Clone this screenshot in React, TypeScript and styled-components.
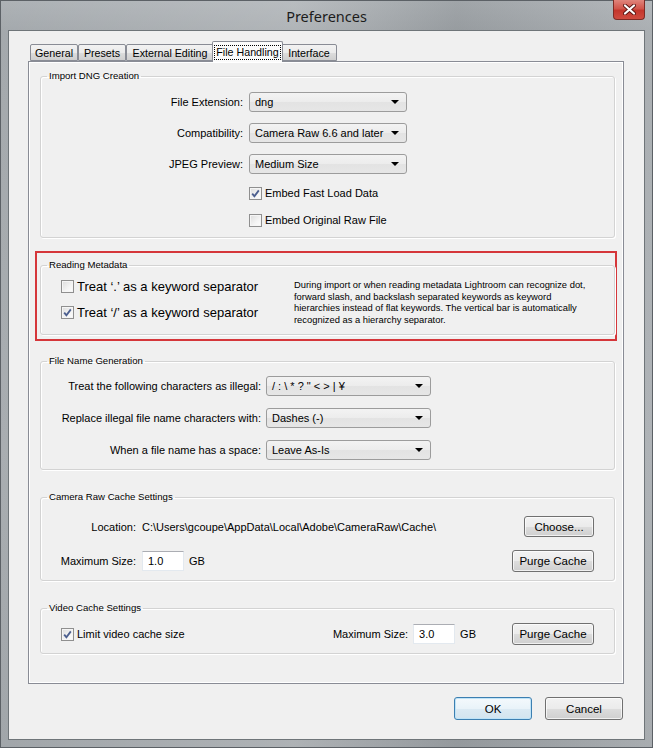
import styled, { createGlobalStyle } from "styled-components";

const GlobalStyle = createGlobalStyle`
  html, body {
    margin: 0;
    padding: 0;
  }
  body {
    font-family: "Liberation Sans", Arial, sans-serif;
    font-size: 11px;
    color: #000;
    background: #9a9fa4;
  }
`;

const CheckIcon = () => (
  <svg width="9" height="9" viewBox="0 0 9 9">
    <path d="M1.2 4.6 L3.4 7.2 L7.8 1.4" fill="none" stroke="#4c5f8f" strokeWidth="1.8" />
  </svg>
);

const Checkbox = ({ checked, label, size }: { checked?: boolean; label: string; size?: number }) => (
  <CheckRow $size={size}>
    <Box>{checked && <CheckIcon />}</Box>
    <span>{label}</span>
  </CheckRow>
);

const Select = ({ value, width }: { value: string; width: number }) => (
  <Combo style={{ width }}>
    <span>{value}</span>
    <Arrow />
  </Combo>
);

export default function App() {
  return (
    <>
      <GlobalStyle />
      <Window>
        <TitleBar>
          <span />
          <Title>Preferences</Title>
          <CloseButton>
            <svg width="13" height="11" viewBox="0 0 13 11">
              <path d="M2 1.5 L11 9.5 M11 1.5 L2 9.5" stroke="#5a1512" strokeWidth="4" strokeLinecap="round" />
              <path d="M2 1.5 L11 9.5 M11 1.5 L2 9.5" stroke="#fff" strokeWidth="2.2" strokeLinecap="round" />
            </svg>
          </CloseButton>
        </TitleBar>

        <Client>
          <Tabs>
            <Tab $w={48}>General</Tab>
            <Tab $w={48}>Presets</Tab>
            <Tab $w={88}>External Editing</Tab>
            <Tab $w={71} $active>
              <Focus>File Handling</Focus>
            </Tab>
            <Tab $w={56}>Interface</Tab>
          </Tabs>

          <Panel>
            <Group>
              <Legend>Import DNG Creation</Legend>
              <FormGrid $label={202} $gap={6} $rowGap={11} $padTop={10} $padBottom={9}>
                <Label>File Extension:</Label>
                <Select value="dng" width={158} />
                <Label>Compatibility:</Label>
                <Select value="Camera Raw 6.6 and later" width={158} />
                <Label>JPEG Preview:</Label>
                <Select value="Medium Size" width={158} />
                <span />
                <Checkbox checked label="Embed Fast Load Data" />
                <span />
                <Checkbox label="Embed Original Raw File" />
              </FormGrid>
            </Group>

            <Highlight>
              <Group>
                <Legend>Reading Metadata</Legend>
                <MetaGrid>
                  <CheckStack>
                    <Checkbox size={13} label="Treat ‘.’ as a keyword separator" />
                    <Checkbox size={13} checked label="Treat ‘/’ as a keyword separator" />
                  </CheckStack>
                  <Note>
                    During import or when reading metadata Lightroom can recognize dot,
                    <br />
                    forward slash, and backslash separated keywords as keyword
                    <br />
                    hierarchies instead of flat keywords. The vertical bar is automatically
                    <br />
                    recognized as a hierarchy separator.
                  </Note>
                </MetaGrid>
              </Group>
            </Highlight>

            <Group $mt={14}>
              <Legend>File Name Generation</Legend>
              <FormGrid $label={220} $gap={5} $rowGap={12} $padTop={9} $padBottom={9}>
                <Label>Treat the following characters as illegal:</Label>
                <Select value={'/ : \\ * ? " < > | ¥'} width={165} />
                <Label>Replace illegal file name characters with:</Label>
                <Select value="Dashes (-)" width={165} />
                <Label>When a file name has a space:</Label>
                <Select value="Leave As-Is" width={165} />
              </FormGrid>
            </Group>

            <Group>
              <Legend>Camera Raw Cache Settings</Legend>
              <CacheGrid>
                <Label>Location:</Label>
                <PathText>C:\Users\gcoupe\AppData\Local\Adobe\CameraRaw\Cache\</PathText>
                <Button $w={70} $h={21}>Choose...</Button>
                <Label>Maximum Size:</Label>
                <SizeField>
                  <TextInput>1.0</TextInput>
                  <span>GB</span>
                </SizeField>
                <Button $w={82} $h={22}>Purge Cache</Button>
              </CacheGrid>
            </Group>

            <Group>
              <Legend>Video Cache Settings</Legend>
              <VideoRow>
                <Checkbox checked label="Limit video cache size" />
                <SizeField>
                  <span>Maximum Size:</span>
                  <TextInput>3.0</TextInput>
                  <span>GB</span>
                </SizeField>
                <Button $w={82} $h={22}>Purge Cache</Button>
              </VideoRow>
            </Group>
          </Panel>

          <Footer>
            <Button $w={78} $h={23} $default>OK</Button>
            <Button $w={78} $h={23}>Cancel</Button>
          </Footer>
        </Client>
      </Window>
    </>
  );
}

const Window = styled.div`
  width: 653px;
  height: 748px;
  box-sizing: border-box;
  display: flex;
  flex-direction: column;
  border: 1px solid #5c6166;
  padding: 0 7px 7px;
  background: linear-gradient(
      90deg,
      rgba(255, 255, 255, 0.05) 0%,
      rgba(255, 255, 255, 0.18) 45%,
      rgba(0, 0, 0, 0.05) 70%,
      rgba(255, 255, 255, 0.12) 100%
    ),
    linear-gradient(180deg, #a9aeb2 0%, #9fa4a8 30px, #a4a9ad 60%, #9ca1a5 100%);
`;

const TitleBar = styled.div`
  height: 29px;
  display: grid;
  grid-template-columns: 1fr auto 1fr;
  align-items: center;
`;

const Title = styled.div`
  font-family: "Noto Sans", "Open Sans", sans-serif;
  font-size: 14.5px;
  color: #1c1c1c;
  padding-top: 1px;
`;

const CloseButton = styled.div`
  justify-self: end;
  align-self: start;
  margin-top: -1px;
  width: 32px;
  height: 20px;
  box-sizing: border-box;
  border: 1px solid #7e2a24;
  border-top: none;
  border-radius: 0 0 4px 4px;
  background: linear-gradient(180deg, #e0857c 0%, #d1554b 45%, #c4362c 55%, #cf4b3f 100%);
  display: flex;
  align-items: center;
  justify-content: center;
`;

const Client = styled.div`
  flex: 1;
  display: flex;
  flex-direction: column;
  background: #f0f0f0;
  border: 1px solid #6f7579;
  padding: 10px 20px 0 19px;
`;

const Tabs = styled.div`
  display: flex;
  align-items: flex-end;
  height: 20px;
  padding-left: 2px;
  position: relative;
  z-index: 1;
`;

const Tab = styled.div<{ $w: number; $active?: boolean }>`
  width: ${(p) => p.$w}px;
  box-sizing: border-box;
  height: ${(p) => (p.$active ? 21 : 17)}px;
  margin: ${(p) => (p.$active ? "0 -2px -1px" : "0")};
  border: 1px solid #898c95;
  border-bottom: ${(p) => (p.$active ? "none" : "1px solid #898c95")};
  border-radius: 2px 2px 0 0;
  background: ${(p) =>
    p.$active
      ? "#fbfbfb"
      : "linear-gradient(180deg, #f2f2f2 0%, #ebebeb 50%, #dddddd 51%, #cfcfcf 100%)"};
  display: flex;
  align-items: center;
  justify-content: center;
  font-size: 10.7px;
  position: relative;
  z-index: ${(p) => (p.$active ? 2 : 0)};
  white-space: nowrap;
`;

const Focus = styled.span`
  border: 1px dotted #000;
  padding: 0 1px;
  line-height: 13px;
`;

const Panel = styled.div`
  height: 623px;
  box-sizing: border-box;
  border: 1px solid #898c95;
  box-shadow: inset 1px 1px 0 #fff, inset -1px -1px 0 #fff;
  background: #f0f0f0;
  padding: 8px 8px 0 11px;
  display: flex;
  flex-direction: column;
`;

const Group = styled.fieldset<{ $mt?: number }>`
  margin: ${(p) => p.$mt ?? 21}px 0 0;
  padding: 0;
  min-width: 0;
  border: 1px solid #d3d3d3;
  border-radius: 3px;
  box-shadow: inset 1px 1px 0 #fff, 1px 1px 0 #fff;
  &:first-child {
    margin-top: 0;
  }
`;

const Legend = styled.legend`
  margin-left: 6px;
  padding: 0 2px;
  font-size: 9.6px;
  line-height: 12px;
  color: #000;
`;

const FormGrid = styled.div<{ $label: number; $gap: number; $rowGap: number; $padTop: number; $padBottom: number }>`
  display: grid;
  grid-template-columns: ${(p) => p.$label}px auto;
  column-gap: ${(p) => p.$gap}px;
  row-gap: ${(p) => p.$rowGap}px;
  align-items: center;
  justify-items: start;
  padding: ${(p) => p.$padTop}px 0 ${(p) => p.$padBottom}px;
`;

const Label = styled.span`
  justify-self: end;
  white-space: nowrap;
`;

const Combo = styled.div`
  height: 20px;
  box-sizing: border-box;
  border: 1px solid #9c9c9c;
  border-radius: 3px;
  background: linear-gradient(180deg, #f3f3f3 0%, #ececec 50%, #e3e3e3 51%, #e6e6e6 100%);
  display: flex;
  align-items: center;
  justify-content: space-between;
  padding: 0 7px 0 5px;
  white-space: nowrap;
`;

const Arrow = styled.span`
  width: 0;
  height: 0;
  border-left: 4px solid transparent;
  border-right: 4px solid transparent;
  border-top: 4px solid #000;
`;

const CheckRow = styled.label<{ $size?: number }>`
  display: flex;
  align-items: center;
  gap: 3px;
  height: 16px;
  font-size: ${(p) => p.$size ?? 11}px;
  white-space: nowrap;
`;

const Box = styled.span`
  width: 13px;
  height: 13px;
  box-sizing: border-box;
  border: 1px solid #8f8f8f;
  background: linear-gradient(135deg, #dcdcdc 0%, #f4f4f4 60%, #fdfdfd 100%);
  box-shadow: inset 0 0 0 1px #f5f5f5;
  display: flex;
  align-items: center;
  justify-content: center;
`;

const Highlight = styled.div`
  margin: 13px -2px 0 -5px;
  border: 2px solid #d5363a;
  padding: 6px 0 4px 3px;
`;

const MetaGrid = styled.div`
  display: grid;
  grid-template-columns: 233px 1fr;
  padding: 7px 0 9px 20px;
`;

const CheckStack = styled.div`
  display: flex;
  flex-direction: column;
  gap: 10px;
`;

const Note = styled.p`
  margin: 1px 0 0;
  font-size: 9.4px;
  line-height: 11.5px;
  white-space: nowrap;
`;

const CacheGrid = styled.div`
  display: grid;
  grid-template-columns: 95px 1fr auto;
  column-gap: 6px;
  row-gap: 13px;
  align-items: center;
  padding: 13px 20px 8px 0;
`;

const PathText = styled.span`
  white-space: nowrap;
`;

const SizeField = styled.div`
  display: flex;
  align-items: center;
  gap: 5px;
`;

const TextInput = styled.span`
  width: 42px;
  height: 20px;
  box-sizing: border-box;
  border: 1px solid #e3e9ef;
  border-top-color: #abadb3;
  background: #fff;
  display: flex;
  align-items: center;
  padding-left: 5px;
`;

const VideoRow = styled.div`
  display: flex;
  align-items: center;
  padding: 9px 20px 8px 20px;
  & > ${SizeField} {
    margin-left: auto;
    margin-right: 36px;
  }
`;

const Button = styled.div<{ $w: number; $h: number; $default?: boolean }>`
  width: ${(p) => p.$w}px;
  height: ${(p) => p.$h}px;
  box-sizing: border-box;
  justify-self: end;
  border: 1px solid ${(p) => (p.$default ? "#3c7fb1" : "#707070")};
  border-radius: 3px;
  background: ${(p) =>
    p.$default
      ? "linear-gradient(180deg, #f4f9fc 0%, #e9f3f9 50%, #dceaf3 51%, #d3e4ef 100%)"
      : "linear-gradient(180deg, #f2f2f2 0%, #ebebeb 50%, #dddddd 51%, #cfcfcf 100%)"};
  box-shadow: inset 0 0 0 1px ${(p) => (p.$default ? "#bfe3f7" : "rgba(255,255,255,0.7)")};
  display: flex;
  align-items: center;
  justify-content: center;
  font-size: 11.5px;
  white-space: nowrap;
`;

const Footer = styled.div`
  display: flex;
  justify-content: flex-end;
  gap: 13px;
  padding: 13px 1px 0 0;
`;
